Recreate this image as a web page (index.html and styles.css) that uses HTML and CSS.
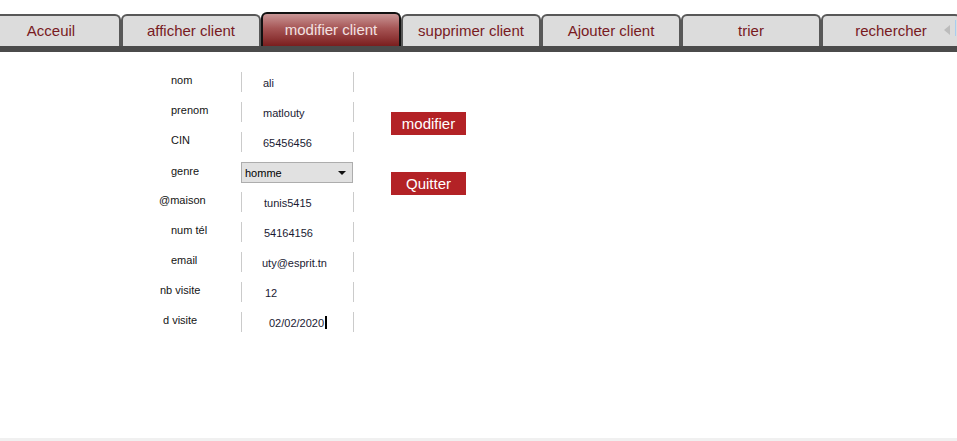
FILE: index.html
```html
<!DOCTYPE html>
<html lang="fr">
<head>
<meta charset="utf-8">
<title>modifier client</title>
<link rel="stylesheet" href="styles.css">
</head>
<body>
<div class="page">
  <nav class="tabs">
    <div class="tab">Acceuil</div>
    <div class="tab">afficher client</div>
    <div class="tab active">modifier client</div>
    <div class="tab">supprimer client</div>
    <div class="tab">Ajouter client</div>
    <div class="tab">trier</div>
    <div class="tab">rechercher</div>
    <span class="scroll-arrow"></span>
    <span class="scroll-edge"></span>
  </nav>
  <div class="bar"></div>
  <main class="content">
    <div class="form">
      <label class="lbl">nom</label><div class="field">ali</div>
      <label class="lbl">prenom</label><div class="field">matlouty</div>
      <label class="lbl">CIN</label><div class="field">65456456</div>
      <label class="lbl lbl-genre">genre</label>
      <div class="combo"><span>homme</span><span class="combo-arrow"></span></div>
      <label class="lbl lbl-wide">@maison</label><div class="field field-b">tunis5415</div>
      <label class="lbl">num tél</label><div class="field field-b">54164156</div>
      <label class="lbl">email</label><div class="field field-a">uty@esprit.tn</div>
      <label class="lbl lbl-nb">nb visite</label><div class="field field-c">12</div>
      <label class="lbl lbl-d">d visite</label><div class="field field-d">02/02/2020<span class="cursor"></span></div>
    </div>
    <div class="actions">
      <button class="btn">modifier</button>
      <button class="btn">Quitter</button>
    </div>
  </main>
  <div class="statusline"></div>
</div>
</body>
</html>
```

FILE: styles.css
```css
html, body {
  margin: 0;
  padding: 0;
  background: #ffffff;
  overflow: hidden;
}

body {
  font-family: "Liberation Sans", Arial, sans-serif;
}

.page {
  height: 441px;
  display: flex;
  flex-direction: column;
}

.tabs {
  position: relative;
  display: flex;
  align-items: flex-end;
  height: 46px;
  margin-left: -19px;
}

.tab {
  box-sizing: border-box;
  flex: 0 0 140px;
  height: 32px;
  border: 2px solid #585858;
  border-bottom: 0;
  border-radius: 6px 6px 0 0;
  background: #dcdcdc;
  color: #781a1f;
  font-size: 15px;
  display: flex;
  align-items: center;
  justify-content: center;
  padding-bottom: 2px;
  white-space: nowrap;
}

.tab.active {
  height: 34px;
  border-color: #111111;
  background: linear-gradient(#c99696, #a65555 45%, #7b1e1e);
  color: #f3e2e2;
}

.scroll-arrow {
  position: absolute;
  right: 7px;
  top: 25px;
  width: 0;
  height: 0;
  border-top: 5px solid transparent;
  border-bottom: 5px solid transparent;
  border-right: 6px solid #bcbcbc;
}

.scroll-edge {
  position: absolute;
  right: 1px;
  top: 20px;
  width: 1px;
  height: 16px;
  background: #a9cdee;
}

.bar {
  height: 6px;
  background: #4b4b4b;
}

.content {
  display: flex;
  padding: 20px 0 0 159px;
}

.form {
  display: grid;
  grid-template-columns: 82px 113px;
  grid-auto-rows: 20px;
  row-gap: 10px;
  font-size: 11px;
}

.lbl {
  padding: 1px 0 0 12px;
  line-height: 14px;
  color: #141414;
}

.lbl-genre { padding-top: 2px; }
.lbl-wide { padding-left: 0; }
.lbl-nb { padding-left: 1px; }
.lbl-d { padding-left: 4px; }

.field {
  box-sizing: border-box;
  border-left: 1px solid #cbcbcb;
  border-right: 1px solid #cbcbcb;
  padding: 4px 0 0 21px;
  line-height: 14px;
  color: #1a1a33;
  white-space: nowrap;
}

.field-a { padding-left: 20px; }
.field-b { padding-left: 22px; }
.field-c { padding-left: 23px; }
.field-d { padding-left: 27px; }

.cursor {
  display: inline-block;
  width: 2px;
  height: 13px;
  margin-left: 1px;
  background: #000000;
  vertical-align: -2px;
}

.combo {
  box-sizing: border-box;
  width: 112px;
  height: 21px;
  border: 1px solid #adadad;
  background: #e1e1e1;
  padding: 0 6px 0 3px;
  display: flex;
  align-items: center;
  justify-content: space-between;
  color: #000000;
  line-height: 14px;
}

.combo-arrow {
  width: 0;
  height: 0;
  border-left: 4px solid transparent;
  border-right: 4px solid transparent;
  border-top: 4px solid #111111;
}

.actions {
  display: flex;
  flex-direction: column;
  gap: 37px;
  margin-left: 37px;
  padding-top: 40px;
}

.btn {
  width: 75px;
  height: 23px;
  padding: 0;
  border: 0;
  background: #b32226;
  color: #ffffff;
  font-family: "Liberation Sans", Arial, sans-serif;
  font-size: 15px;
  line-height: 23px;
}

.statusline {
  margin-top: auto;
  height: 3px;
  background: #f0f0f0;
}
```
